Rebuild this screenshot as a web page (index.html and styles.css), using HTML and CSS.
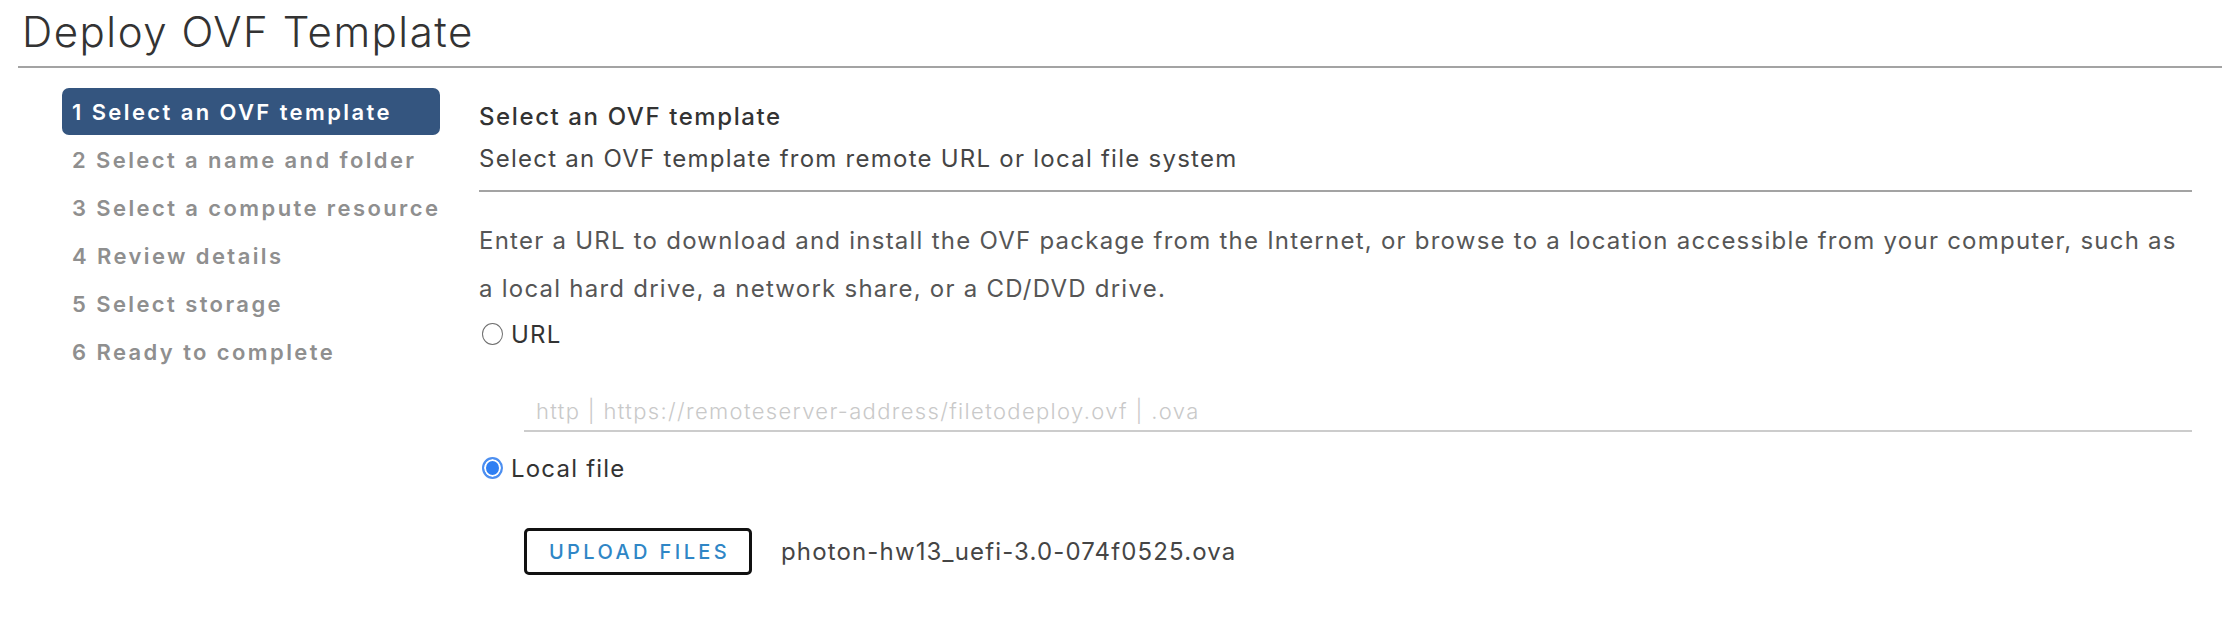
FILE: index.html
```html
<!DOCTYPE html>
<html lang="en">
<head>
<meta charset="utf-8">
<title>Deploy OVF Template</title>
<link rel="stylesheet" href="styles.css">
</head>
<body>
<header class="header">
  <h1 class="title">Deploy OVF Template</h1>
</header>
<div class="wizard">
  <nav class="steps">
    <div class="step active">1 Select an OVF template</div>
    <div class="step">2 Select a name and folder</div>
    <div class="step">3 Select a compute resource</div>
    <div class="step">4 Review details</div>
    <div class="step">5 Select storage</div>
    <div class="step">6 Ready to complete</div>
  </nav>
  <main class="content">
    <div class="page-head">
      <div class="page-title">Select an OVF template</div>
      <div class="page-sub">Select an OVF template from remote URL or local file system</div>
    </div>
    <p class="desc">Enter a URL to download and install the OVF package from the Internet, or browse to a location accessible from your computer, such as a local hard drive, a network share, or a CD/DVD drive.</p>
    <label class="radio-row">
      <span class="radio"></span>
      <span class="radio-label">URL</span>
    </label>
    <div class="url-input">
      <span class="placeholder">http | https://remoteserver-address/filetodeploy.ovf | .ova</span>
    </div>
    <label class="radio-row">
      <span class="radio checked"></span>
      <span class="radio-label">Local file</span>
    </label>
    <div class="upload-row">
      <button class="upload-btn" type="button">UPLOAD FILES</button>
      <span class="filename">photon-hw13_uefi-3.0-074f0525.ova</span>
    </div>
  </main>
</div>
</body>
</html>
```
FILE: styles.css
```css
* { box-sizing: border-box; }
html, body {
  margin: 0;
  padding: 0;
  background: #ffffff;
  font-family: Inter, "Open Sans", "Liberation Sans", sans-serif;
}
.header {
  margin-left: 18px;
  border-bottom: 2px solid #a3a3a3;
  height: 68px;
  display: flex;
  align-items: flex-start;
}
.title {
  margin: 0;
  padding-left: 4px;
  padding-top: 6px;
  font-size: 42px;
  line-height: 52px;
  font-weight: 300;
  letter-spacing: 1.5px;
  color: #333333;
}
.wizard {
  display: flex;
  padding-top: 20px;
}
.steps {
  margin-left: 62px;
  width: 378px;
  display: flex;
  flex-direction: column;
  gap: 1px;
}
.step {
  height: 47px;
  display: flex;
  align-items: center;
  padding: 0 10px;
  font-size: 22px;
  font-weight: 600;
  letter-spacing: 2.4px;
  color: #8f8f8f;
  border-radius: 7px;
  white-space: nowrap;
}
.step.active {
  background: #34557f;
  color: #ffffff;
}
.content {
  margin-left: 39px;
  width: 1713px;
  display: flex;
  flex-direction: column;
  align-items: flex-start;
}
.page-head {
  align-self: stretch;
  padding-top: 8px;
  padding-bottom: 10px;
  border-bottom: 2px solid #a3a3a3;
}
.page-title {
  font-size: 24px;
  line-height: 42px;
  font-weight: 500;
  letter-spacing: 1.6px;
  color: #333333;
}
.page-sub {
  font-size: 24px;
  line-height: 42px;
  letter-spacing: 1.25px;
  color: #454545;
}
.desc {
  margin: 25px 0 0 0;
  font-size: 24px;
  line-height: 48px;
  letter-spacing: 1.24px;
  color: #565656;
}
.radio-row {
  display: flex;
  align-items: center;
  height: 42px;
  padding-left: 3px;
  gap: 8px;
}
.radio {
  width: 21px;
  height: 22px;
  border-radius: 50%;
  border: 1.5px solid #6f6f6f;
  background: #fff;
}
.radio.checked {
  border: 2px solid #4d8ff0;
  background: #2f7ff3;
  box-shadow: inset 0 0 0 2px #ffffff;
}
.radio-label {
  font-size: 24px;
  letter-spacing: 1.2px;
  color: #333333;
}
.url-input {
  align-self: stretch;
  margin: 36px 0 15px 45px;
  height: 41px;
  padding-left: 12px;
  border-bottom: 2px solid #cccccc;
  display: flex;
  align-items: center;
}
.placeholder {
  font-size: 22px;
  font-weight: 300;
  letter-spacing: 1.35px;
  color: #c9c9c9;
}
.upload-row {
  margin: 39px 0 0 45px;
  display: flex;
  align-items: center;
  gap: 29px;
}
.upload-btn {
  width: 228px;
  height: 47px;
  border: 3px solid #111111;
  border-radius: 5px;
  background: #ffffff;
  color: #2f86c6;
  font-family: Inter, "Open Sans", sans-serif;
  font-size: 20px;
  font-weight: 500;
  letter-spacing: 3.4px;
  padding: 0 0 0 3px;
}
.filename {
  font-size: 24px;
  letter-spacing: 1.15px;
  color: #454545;
}
```
